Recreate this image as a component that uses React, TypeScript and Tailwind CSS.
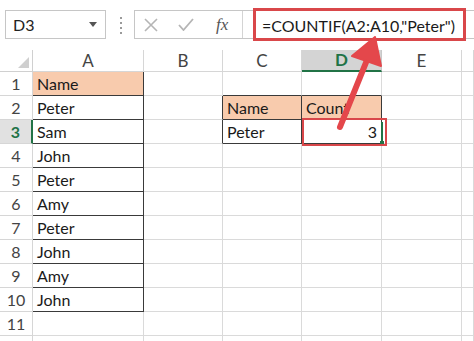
import React from 'react';

const cols = ['A', 'B', 'C', 'D', 'E', ''];
const colW = 'grid-cols-[33px_111px_79px_79px_80px_80px_1fr]';

const values: Record<string, string> = {
  '1-1': 'Name',
  '2-1': 'Peter',
  '3-1': 'Sam',
  '4-1': 'John',
  '5-1': 'Peter',
  '6-1': 'Amy',
  '7-1': 'Peter',
  '8-1': 'John',
  '9-1': 'Amy',
  '10-1': 'John',
  '2-3': 'Name',
  '2-4': 'Count',
  '3-3': 'Peter',
  '3-4': '3',
};

const orange = ['1-1', '2-3', '2-4'];

function inTable(r: number, c: number) {
  if (c === 1 && r >= 1 && r <= 10) return true;
  if ((c === 3 || c === 4) && (r === 2 || r === 3)) return true;
  return false;
}

function Cell({ r, c }: { r: number; c: number }) {
  const key = `${r}-${c}`;
  const darkR = inTable(r, c) || inTable(r, c + 1);
  const darkB = inTable(r, c) || inTable(r + 1, c);
  const v = values[key];
  return (
    <div
      className={`flex items-center border-r border-b px-[4px] overflow-hidden whitespace-nowrap ${
        darkR ? 'border-r-[#3a3a3a]' : 'border-r-[#dadada]'
      } ${darkB ? 'border-b-[#3a3a3a]' : 'border-b-[#dadada]'} ${
        orange.includes(key) ? 'bg-[#f8cbad]' : 'bg-white'
      } ${key === '3-4' ? 'justify-end' : ''}`}
    >
      <span className="text-[16px] text-[#1a1a1a]">{v}</span>
    </div>
  );
}

export default function App() {
  const rows = Array.from({ length: 12 }, (_, i) => i + 1);

  return (
    <div className="relative w-[474px] h-[341px] overflow-hidden bg-white font-['Lato',sans-serif]">
      {/* formula bar */}
      <div className="flex h-[50px] items-start pt-[10px]">
        <div className="ml-[5px] flex h-[29px] w-[101px] items-center justify-between border border-[#c6c6c6] pl-[7px] pr-[8px]">
          <span className="text-[16px] text-[#222]">D3</span>
          <svg width="8" height="5" viewBox="0 0 8 5">
            <path d="M0 0h8L4 5z" fill="#555" />
          </svg>
        </div>
        <div className="ml-[14px] mt-[7px] flex w-[3px] flex-col gap-[3px]">
          <div className="h-[2px] w-[2px] bg-[#9a9a9a]" />
          <div className="h-[2px] w-[2px] bg-[#9a9a9a]" />
          <div className="h-[2px] w-[2px] bg-[#9a9a9a]" />
          <div className="h-[2px] w-[2px] bg-[#9a9a9a]" />
        </div>
        <div className="ml-[11px] flex h-[29px] flex-1 border border-r-0 border-[#c6c6c6]">
          <div className="flex w-[108px] items-center border-r border-[#d4d4d4]">
            <svg className="ml-[9px]" width="14" height="14" viewBox="0 0 14 14">
              <path d="M1 1L13 13M13 1L1 13" stroke="#b5b5b5" strokeWidth="1.6" />
            </svg>
            <svg className="ml-[20px]" width="16" height="13" viewBox="0 0 16 13">
              <path d="M1 7l4.5 5L15 1" stroke="#b5b5b5" strokeWidth="1.8" fill="none" />
            </svg>
            <span className="ml-[22px] font-['Liberation_Serif',serif] text-[17px] italic text-[#555]">
              fx
            </span>
          </div>
          <div className="flex-1" />
        </div>
      </div>

      {/* grid */}
      <div className={`grid ${colW} grid-rows-[22px_repeat(12,24px)]`}>
        <div className="relative border-r border-b border-[#d0d0d0] bg-white">
          <svg className="absolute right-[3px] bottom-[3px]" width="11" height="11" viewBox="0 0 11 11">
            <path d="M11 0V11H0z" fill="#cfcfcf" />
          </svg>
        </div>
        {cols.map((c, i) =>
          c === 'D' ? (
            <div
              key={i}
              className="flex items-center justify-center border-r border-r-[#c8c8c8] border-b-2 border-b-[#217346] bg-[#d4d4d4] text-[17px] font-bold text-[#217346]"
            >
              {c}
            </div>
          ) : (
            <div
              key={i}
              className="flex items-center justify-center border-r border-b border-[#d6d6d6] bg-white text-[17px] text-[#444]"
            >
              {c}
            </div>
          )
        )}
        {rows.map((r) => (
          <React.Fragment key={r}>
            {r === 3 ? (
              <div className="flex items-center justify-center border-r-2 border-b border-r-[#217346] border-b-[#d6d6d6] bg-[#e1e1e1] text-[16px] font-bold text-[#217346]">
                {r}
              </div>
            ) : (
              <div className="flex items-center justify-center border-r border-b border-[#d6d6d6] bg-white text-[16px] text-[#444]">
                {r <= 11 ? r : ''}
              </div>
            )}
            {cols.map((_, i) => (
              <Cell key={i} r={r} c={i + 1} />
            ))}
          </React.Fragment>
        ))}
      </div>

      {/* selection marker on D3 */}
      <div className="absolute left-[381px] top-[122px] h-[21px] w-[2px] bg-[#217346]" />
      <div className="absolute left-[380px] top-[141px] h-[4px] w-[4px] bg-[#217346]" />

      {/* red annotations */}
      <div className="absolute left-[253px] top-[8px] h-[33px] w-[213px] border-[3px] border-[#d9474a]" />
      <div className="absolute left-[302px] top-[118px] h-[28px] w-[85px] border-[2px] border-[#d9474a]" />
      <div className="absolute left-[262px] top-[14px] text-[16px] text-[#1a1a1a]">
        =COUNTIF(A2:A10,"Peter")
      </div>
      <svg className="pointer-events-none absolute left-0 top-0" width="474" height="341">
        <path d="M340 127L367 60" stroke="#e4474b" strokeWidth="6" strokeLinecap="round" />
        <path d="M375 37L352 56L381 66z" fill="#e4474b" stroke="#e4474b" strokeWidth="2" strokeLinejoin="round" />
      </svg>
    </div>
  );
}
